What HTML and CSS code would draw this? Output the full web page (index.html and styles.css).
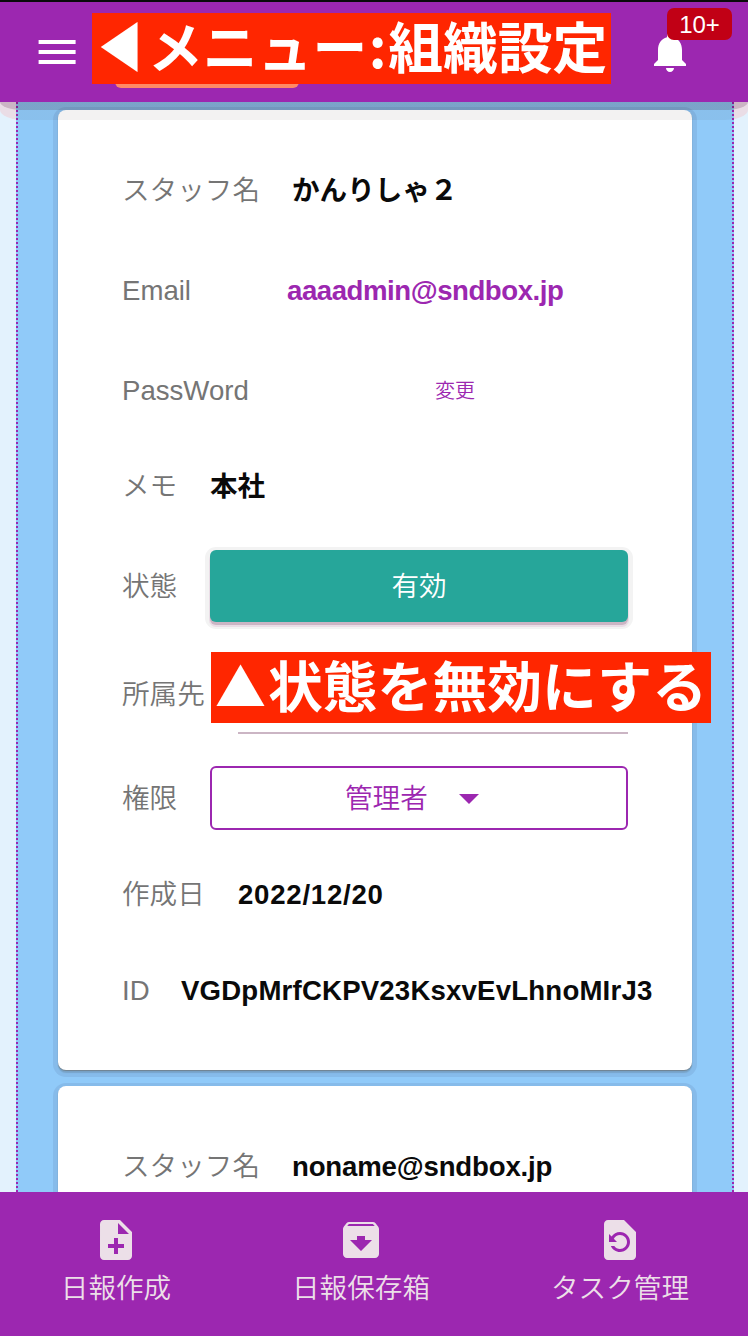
FILE: index.html
```html
<!DOCTYPE html>
<html lang="ja">
<head>
<meta charset="utf-8">
<title>組織設定</title>
<link rel="stylesheet" href="styles.css">
</head>
<body>
<div class="app">
  <header class="header">
    <svg class="icon" viewBox="0 0 24 24"><path d="M2.8 18h18.5v-2H2.8v2zm0-5h18.5v-2H2.8v2zm0-7v2h18.5V6H2.8z"/></svg>
    <div class="bell">
      <svg class="icon" viewBox="0 0 24 24"><path d="M12 22c1.1 0 2-.9 2-2h-4c0 1.1.89 2 2 2zm6-6v-5c0-3.07-1.64-5.64-4.5-6.32V4c0-.83-.67-1.5-1.5-1.5s-1.5.67-1.5 1.5v.68C7.63 5.36 6 7.92 6 11v5l-2 2v1h16v-1l-2-2z"/></svg>
      <span class="badge">10+</span>
    </div>
    <div class="tab-edge"></div>
    <div class="callout callout-menu"><span class="arrow-left">◀</span><span>メニュー</span><span class="colon">:</span><span>組織設定</span></div>
  </header>

  <main class="main">
    <div class="column">
      <section class="card">
        <div class="row h100"><span class="label w170">スタッフ名</span><b class="value jp">かんりしゃ２</b></div>
        <div class="row h102"><span class="label w165 latin">Email</span><b class="value mail">aaaadmin@sndbox.jp</b></div>
        <div class="row h98"><span class="label w313 latin">PassWord</span><span class="change">変更</span></div>
        <div class="row h92"><span class="label w88">メモ</span><b class="value jp">本社</b></div>
        <div class="row h108"><span class="label w88">状態</span><button class="status"><span class="jp">有効</span></button></div>
        <div class="row h108"><span class="label w116">所属先</span><span class="field"></span>
          <div class="callout callout-status"><span class="arrow-up">▲</span><span>状態を無効にする</span></div></div>
        <div class="row h100"><span class="label w88">権限</span><button class="role"><span class="jp">管理者</span><svg class="caret" viewBox="0 0 20 10"><path d="M0 0h20L10 10z"/></svg></button></div>
        <div class="row h92"><span class="label w116">作成日</span><b class="value date">2022/12/20</b></div>
        <div class="row h100"><span class="label w59 latin id">ID</span><b class="value uid">VGDpMrfCKPV23KsxvEvLhnoMIrJ3</b></div>
      </section>
      <section class="card">
        <div class="row h100"><span class="label w170">スタッフ名</span><b class="value mail2">noname@sndbox.jp</b></div>
      </section>
    </div>
  </main>

  <nav class="nav">
    <a class="tab"><svg class="icon" viewBox="0 0 24 24"><path d="M14 2H6c-1.1 0-1.99.9-1.99 2L4 20c0 1.1.89 2 1.99 2H18c1.1 0 2-.9 2-2V8l-6-6zm2 14h-3v3h-2v-3H8v-2h3v-3h2v3h3v2zm-3-7V3.5L18.5 9H13z"/></svg><span>日報作成</span></a>
    <a class="tab"><svg class="icon" viewBox="0 0 24 24"><path d="M20.54 5.23l-1.39-1.68C18.88 3.21 18.47 3 18 3H6c-.47 0-.88.21-1.16.55L3.46 5.23C3.17 5.57 3 6.02 3 6.5V19c0 1.1.9 2 2 2h14c1.1 0 2-.9 2-2V6.5c0-.48-.17-.93-.46-1.27zM12 17.5L6.5 12H10v-2h4v2h3.5L12 17.5zM5.12 5l.81-1h12l.94 1H5.12z"/></svg><span>日報保存箱</span></a>
    <a class="tab tab-last"><svg class="icon" viewBox="0 0 24 24"><path d="M14 2H6c-1.1 0-1.99.9-1.99 2L4 20c0 1.1.89 2 1.99 2H18c1.1 0 2-.9 2-2V8l-6-6zm-2 16c-2.05 0-3.81-1.24-4.58-3h1.71c.63.9 1.68 1.5 2.87 1.5 1.93 0 3.5-1.57 3.5-3.5S13.93 9.5 12 9.5c-1.35 0-2.52.78-3.1 1.9l1.6 1.6h-4V9l1.3 1.3C8.69 8.92 10.23 8 12 8c2.76 0 5 2.24 5 5s-2.24 5-5 5z"/></svg><span>タスク管理</span></a>
  </nav>
</div>
</body>
</html>
```
FILE: styles.css
```css
* { box-sizing: border-box; }
body {
  margin: 0;
  font-family: "Liberation Sans", "Noto Sans CJK JP", sans-serif;
  font-size: 27.6px;
  color: #0a0a0a;
}
button { font: inherit; padding: 0; }
.app {
  display: grid;
  grid-template-rows: 102px 1090px 144px;
  width: 748px;
  height: 1336px;
  overflow: hidden;
}
.icon { display: block; width: 48px; height: 48px; fill: currentColor; }

/* header */
.header {
  position: relative;
  z-index: 2;
  display: flex;
  justify-content: space-between;
  align-items: flex-start;
  padding: 26px 54px 0 33px;
  border-top: 2px solid #0a0a0a;
  background: #9c27b0;
  color: #fff;
}
.bell { position: relative; }
.badge {
  position: absolute;
  left: 21px;
  top: -20px;
  width: 65px;
  height: 32px;
  border-radius: 7px;
  background: #c10015;
  font-size: 24px;
  line-height: 34px;
  text-align: center;
}
.tab-edge {
  position: absolute;
  left: 115px;
  top: 76px;
  width: 184px;
  height: 10px;
  border-radius: 0 0 6px 6px;
  background: #ff8a65;
}
.callout {
  position: absolute;
  z-index: 1;
  display: flex;
  height: 71px;
  background: #ff2600;
  color: #fff;
  font-family: "Noto Sans CJK JP", sans-serif;
  font-size: 54.8px;
  font-weight: 700;
  line-height: 62px;
  white-space: nowrap;
}
.callout-menu { left: 92px; top: 11px; width: 519px; }
.callout-status { left: 89px; top: 12px; width: 500px; padding-left: 2px; }
.arrow-left { width: 56px; padding-left: 6px; font-size: 45px; line-height: 63px; transform: scaleY(1.18); }
.arrow-up { width: 55px; padding-left: 2px; font-size: 51px; line-height: 67px; }
.colon { width: 21px; text-align: center; }

/* content */
.main {
  position: relative;
  padding: 0 14px 0 16px;
  background: #e3f2fd;
  overflow: hidden;
}
.main::before,
.main::after {
  content: "";
  position: absolute;
  z-index: 1;
  left: 0;
  top: 0;
  width: 748px;
}
.main::before {
  height: 8px;
  border-radius: 0 0 24px 24px / 0 0 8px 8px;
  background: linear-gradient(90deg, #cbb5c4 16px, rgba(40, 0, 0, .15) 16px 734px, #cbb5c4 734px);
  z-index: 2;
}
.main::after {
  height: 18px;
  border-radius: 0 0 24px 24px / 0 0 10px 10px;
  background: linear-gradient(90deg, #eadde6 16px, rgba(20, 0, 0, .05) 16px 734px, #eadde6 734px);
}
.column {
  display: flex;
  flex-direction: column;
  gap: 16px;
  height: 1090px;
  padding: 8px 40px 0;
  border: dotted #9c27b0;
  border-width: 0 2px;
  background: #90caf9;
}
.card {
  flex: none;
  padding: 30px 0 30px 64px;
  border-radius: 8px;
  background: #fff;
  box-shadow: 0 1px 1px #71828f, 0 3px 1px #78a5cb, 0 2px 0 5px #86bbea;
}
.row { position: relative; display: flex; align-items: center; white-space: nowrap; }
.h92 { height: 92px; }
.h98 { height: 98px; }
.h100 { height: 100px; }
.h102 { height: 102px; }
.h108 { height: 108px; }
.label {
  flex: none;
  padding-bottom: 4px;
  font-family: "Noto Sans CJK JP", sans-serif;
  font-weight: 350;
  color: #757575;
}
.latin { padding-bottom: 0; font-family: "Liberation Sans", sans-serif; }
.id { padding-top: 2px; }
.jp { display: block; padding-bottom: 4px; }
.w59 { width: 59px; }
.w88 { width: 88px; }
.w116 { width: 116px; }
.w165 { width: 165px; }
.w170 { width: 170px; }
.w313 { width: 313px; }
.mail { color: #9c27b0; letter-spacing: -.45px; }
.mail2 { padding-top: 2px; letter-spacing: -.17px; }
.date { padding-top: 2px; letter-spacing: .75px; }
.uid { padding-top: 2px; letter-spacing: .19px; }
.change { padding-bottom: 4px; color: #9c27b0; font-size: 20px; font-weight: 350; }
.status,
.role { width: 418px; border-radius: 6px; font-weight: 350; }
.status {
  height: 72px;
  border: 0;
  background: #26a69a;
  color: #fff;
  box-shadow: 0 3px 0 #cbb5c4, 0 4px 0 1px #eadde6, 0 2px 0 5px #f3f3f3;
}
.field { width: 390px; height: 80px; border-bottom: 2px solid #cbb5c4; }
.role {
  display: flex;
  align-items: center;
  gap: 31px;
  height: 64px;
  padding-left: 133px;
  border: 2px solid #9c27b0;
  background: #fff;
  color: #9c27b0;
}
.caret { width: 20px; height: 10px; margin-top: 2px; fill: currentColor; }

/* bottom navigation */
.nav {
  z-index: 2;
  display: grid;
  grid-template-columns: 232px 258px 258px;
  background: #9c27b0;
  color: #ecdfe8;
}
.tab {
  display: flex;
  flex-direction: column;
  align-items: center;
  padding-top: 24px;
  font-weight: 350;
}
.tab-last { padding-left: 2px; }
.tab span { line-height: 50px; }
```
